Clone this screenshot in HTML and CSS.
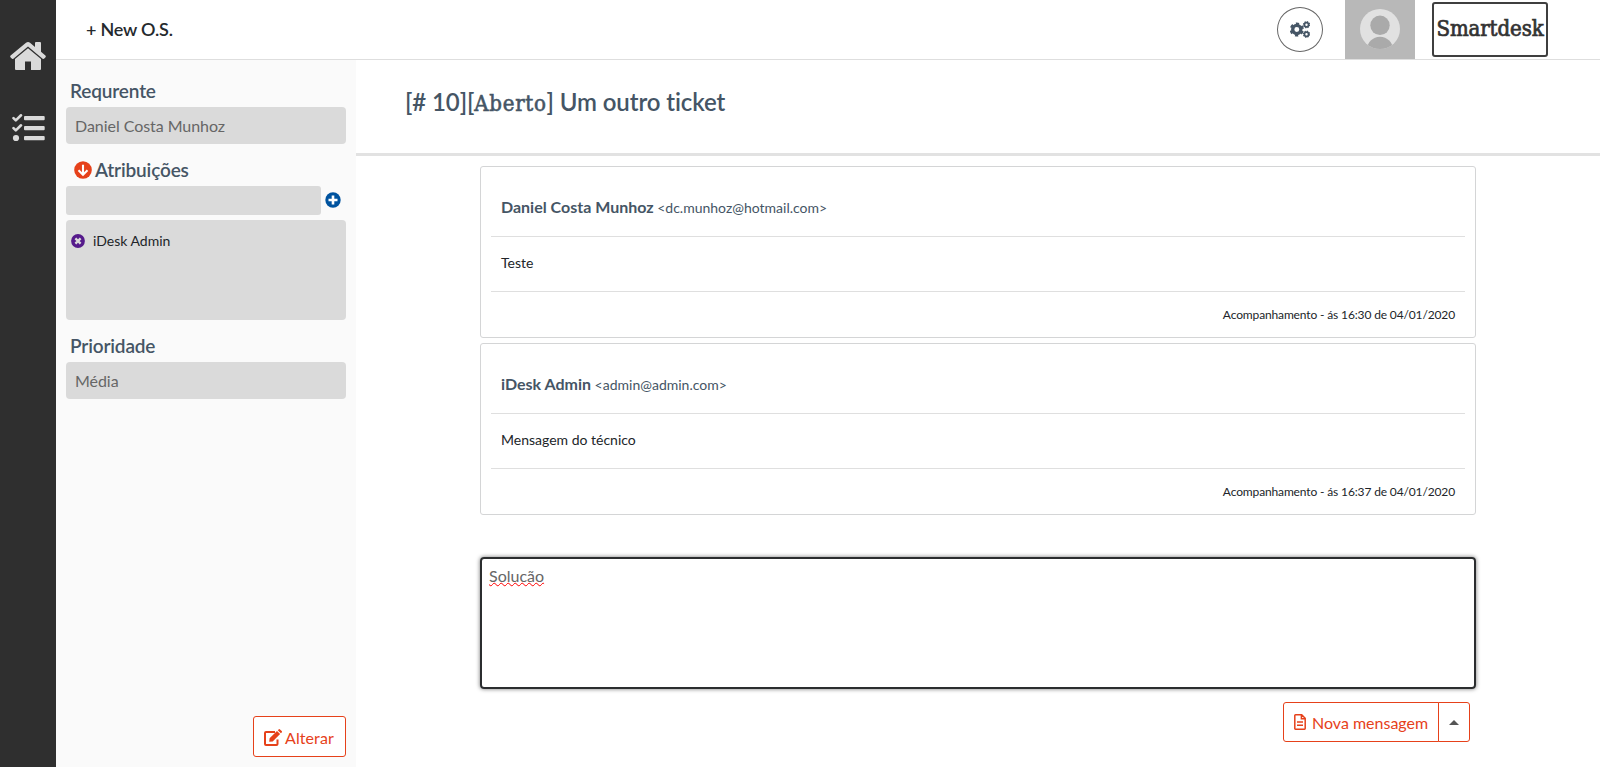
FILE: index.html
```
<!DOCTYPE html>
<html lang="pt-BR">
<head>
<meta charset="utf-8">
<title>Smartdesk</title>
<link rel="stylesheet" href="styles.css">
</head>
<body>
<div class="app">
  <nav class="rail">
    <svg class="rail-home" width="36" height="28" viewBox="0 0 36 28" fill="#dadada">
      <path d="M18 0 C18.8 0 19.4 .3 20 .8 L25 5 V1 Q25 0 26 0 H30 Q31 0 31 1 V9.8 L35.4 13.5 Q36.2 14.3 35.5 15.2 L34.3 16.6 Q33.5 17.4 32.6 16.7 L18 4.6 L3.4 16.7 Q2.5 17.4 1.7 16.6 L.5 15.2 Q-.2 14.3 .6 13.5 L16 .8 Q17 0 18 0Z"/>
      <path d="M18 6.2 L31 17 V27 Q31 28 30 28 H21 V19.5 H15 V28 H6 Q5 28 5 27 V17Z"/>
    </svg>
    <svg class="rail-tasks" width="33" height="28" viewBox="0 0 33 28" fill="#dadada">
      <path d="M1.5 4.1 L3.8 6.4 L9 1.3 M1.5 14.1 L3.8 16.4 L9 11.3" fill="none" stroke="#dadada" stroke-width="2.6" stroke-linecap="round" stroke-linejoin="round"/>
      <circle cx="4" cy="24" r="3.1"/>
      <rect x="12" y="2" width="20.7" height="4.2" rx="1"/><rect x="12" y="12" width="20.7" height="4.2" rx="1"/><rect x="12" y="22" width="20.7" height="4.2" rx="1"/>
    </svg>
  </nav>
  <div class="page">
    <header class="topbar">
      <a class="new-os">+ New O.S.</a>
      <button class="settings" aria-label="Settings">
        <svg width="20" height="17" viewBox="0 0 20 17" fill="none" stroke="#455565">
          <circle cx="6.8" cy="8.5" r="4.1" stroke-width="3.3"/>
          <circle cx="6.8" cy="8.5" r="6" stroke-width="2.2" stroke-dasharray="3.2 3.083" stroke-dashoffset="-1.5"/>
          <circle cx="16.5" cy="3.7" r="2.1" stroke-width="1.8"/>
          <circle cx="16.5" cy="3.7" r="3" stroke-width="1.2" stroke-dasharray="1.3 1.056"/>
          <circle cx="16.5" cy="13.2" r="2.1" stroke-width="1.8"/>
          <circle cx="16.5" cy="13.2" r="3" stroke-width="1.2" stroke-dasharray="1.3 1.056"/>
        </svg>
      </button>
      <svg class="avatar" width="70" height="59" viewBox="0 0 70 59">
        <defs><clipPath id="face"><circle cx="35" cy="29" r="20"/></clipPath></defs>
        <rect width="70" height="59" fill="#b8b8b8"/>
        <circle cx="35" cy="29" r="20" fill="#e1e1e1"/>
        <g clip-path="url(#face)" fill="#aaa"><circle cx="35" cy="25.3" r="9.7"/><circle cx="35" cy="49.8" r="13"/></g>
      </svg>
      <div class="brand">Smartdesk</div>
    </header>
    <div class="columns">
      <aside class="details">
        <h3 class="label">Requrente</h3>
        <div class="field">Daniel Costa Munhoz</div>
        <h3 class="label label-assign">
          <svg width="18" height="18" viewBox="0 0 18 18"><circle cx="9" cy="9" r="8.8" fill="#e6411a"/><path d="M9 3.7V13.5M4.5 9.2L9 13.7L13.5 9.2" fill="none" stroke="#fff" stroke-width="2.1"/></svg>
          <span>Atribuições</span>
        </h3>
        <div class="assign-row">
          <div class="assign-input"></div>
          <svg width="16" height="16" viewBox="0 0 16 16"><circle cx="8" cy="8" r="7.7" fill="#00539f"/><path d="M8 3.5V12.5M3.5 8H12.5" stroke="#fff" stroke-width="2.6"/></svg>
        </div>
        <div class="assignees">
          <svg width="14" height="14" viewBox="0 0 14 14"><circle cx="7" cy="7" r="6.9" fill="#551a8b"/><path d="M4.4 4.4L9.6 9.6M9.6 4.4L4.4 9.6" stroke="#dadada" stroke-width="2.3"/></svg>
          <span>iDesk Admin</span>
        </div>
        <h3 class="label label-priority">Prioridade</h3>
        <div class="field">Média</div>
        <button class="btn btn-edit">
          <svg width="19" height="17" viewBox="0 0 19 17"><path d="M11 3H2Q1 3 1 4V15Q1 16 2 16H12.5Q13.5 16 13.5 15V10.5" fill="none" stroke="#e6411a" stroke-width="2"/><path d="M5.2 12.8L5.6 9.3L13 1.9L16.1 5L8.7 12.4ZM13.8 1.2L14.6.4Q15.3-.2 16 .4L17.7 2.1Q18.3 2.8 17.7 3.5L16.9 4.3Z" fill="#e6411a"/></svg>
          <span>Alterar</span>
        </button>
      </aside>
      <main class="ticket">
        <h1 class="ticket-title">[# 10][<span class="status">Aberto</span>] Um outro ticket</h1>
        <section class="thread">
          <article class="card">
            <div class="card-from"><b>Daniel Costa Munhoz</b> <span>&lt;dc.munhoz@hotmail.com&gt;</span></div>
            <div class="card-text">Teste</div>
            <div class="card-meta">Acompanhamento - ás 16:30 de 04/01/2020</div>
          </article>
          <article class="card">
            <div class="card-from"><b>iDesk Admin</b> <span>&lt;admin@admin.com&gt;</span></div>
            <div class="card-text">Mensagem do técnico</div>
            <div class="card-meta">Acompanhamento - ás 16:37 de 04/01/2020</div>
          </article>
          <div class="reply"><span class="misspelt">Solucão</span></div>
          <div class="actions">
            <button class="btn btn-send">
              <svg width="12" height="16" viewBox="0 0 12 16" fill="none" stroke="#e6411a" stroke-width="1.5"><path d="M1.5.8H7.7L11.2 4.3V14.5Q11.2 15.2 10.5 15.2H1.5Q.8 15.2.8 14.5V1.5Q.8.8 1.5.8ZM7.4 1V4.7H11M3 8H9M3 11.2H9"/></svg>
              <span>Nova mensagem</span>
            </button>
            <button class="btn btn-more" aria-label="Mais"><i class="caret"></i></button>
          </div>
        </section>
      </main>
    </div>
  </div>
</div>
</body>
</html>
```
FILE: styles.css
```
* { box-sizing: border-box; }
body { margin: 0; font-family: Lato, sans-serif; font-size: 16px; color: #212529; background: #fff; font-variant-ligatures: none; }
.app { display: flex; height: 767px; overflow: hidden; }
.rail { width: 56px; flex: none; background: #2f2f2f; display: flex; flex-direction: column; align-items: center; padding-top: 42px; }
.rail svg { display: block; }
.rail-tasks { margin-top: 44px; }
.page { flex: 1; display: flex; flex-direction: column; }
.topbar { height: 60px; flex: none; border-bottom: 1px solid #dedede; display: flex; align-items: flex-start; padding: 0 52px 0 30px; }
.new-os { font-size: 18px; font-weight: 600; line-height: 58px; letter-spacing: -.2px; color: #252a2e; margin-right: auto; }
.settings { width: 46px; height: 45px; margin: 7px 22px 0 0; padding: 0; border: 1px solid #666; border-radius: 50%; background: none; display: flex; align-items: center; justify-content: center; }
.avatar { display: block; margin-right: 17px; }
.brand { width: 116px; height: 55px; margin-top: 2px; border: 2px solid #3f3f3f; border-radius: 3px; color: #333; font: 400 22px/49px "DejaVu Serif Condensed", "DejaVu Serif", serif; font-stretch: condensed; letter-spacing: -.1px; -webkit-text-stroke: .7px #333; white-space: nowrap; display: flex; justify-content: center; }
.columns { flex: 1; display: flex; }
.details { width: 300px; flex: none; background: #fafafa; padding: 19px 10px 10px; display: flex; flex-direction: column; }
.label { margin: 0 0 5px; padding-left: 4px; font-size: 19px; font-weight: 600; line-height: 23px; letter-spacing: -.15px; color: #455565; }
.field { height: 37px; flex: none; border-radius: 4px; background: #dadada; color: #666; line-height: 38px; padding-left: 9px; letter-spacing: -.05px; }
.label-assign { display: flex; align-items: center; gap: 3px; padding-left: 8px; margin: 14px 0 5px; }
.assign-row { display: flex; align-items: center; gap: 4px; height: 29px; }
.assign-row svg { margin-bottom: 1px; }
.assign-input { width: 255px; height: 29px; border-radius: 3px; background: #dadada; }
.assignees { height: 100px; margin-top: 5px; border-radius: 4px; background: #dadada; display: flex; align-items: flex-start; gap: 8px; padding: 14px 5px; font-size: 14px; line-height: 14px; }
.label-priority { margin-top: 14px; }
.btn { font: 16px Lato, sans-serif; color: #e6411a; background: #fff; border: 1px solid #e6411a; border-radius: 3px; padding: 0; display: flex; align-items: center; }
.btn-edit { width: 93px; height: 41px; margin: auto 0 0 auto; padding: 1px 0 0 10px; gap: 2px; letter-spacing: .1px; }
.ticket { flex: 1; }
.ticket-title { margin: 0; height: 96px; border-bottom: 3px solid #e2e2e2; padding: 27px 0 0 49px; font-size: 24px; font-weight: 600; line-height: 29px; color: #455565; white-space: nowrap; letter-spacing: -.1px; }
.status { font-family: "DejaVu Serif Condensed", "DejaVu Serif", serif; font-stretch: condensed; font-weight: 400; font-size: 22px; letter-spacing: .7px; -webkit-text-stroke: .6px #455565; }
.thread { width: 996px; margin: 10px 0 0 124px; display: flex; flex-direction: column; }
.card { height: 172px; margin-bottom: 5px; border: 1px solid #d4d5d6; border-radius: 3px; padding: 0 10px; font-size: 14px; }
.card-from { height: 70px; border-bottom: 1px solid #dfdfdf; padding: 30px 10px 0; line-height: 20px; color: #455565; }
.card-from b { font-size: 16px; }
.card-text { height: 55px; border-bottom: 1px solid #dfdfdf; padding: 16px 10px 0; line-height: 20px; }
.card-meta { padding: 13px 10px 0; font-size: 12px; line-height: 20px; text-align: right; letter-spacing: -.14px; }
.reply { height: 132px; margin-top: 37px; border: 2px solid #2b2d2f; border-radius: 4px; box-shadow: 0 0 4px rgba(0,0,0,.55); padding: 7px; color: #666; line-height: 20px; }
.misspelt { text-decoration: underline wavy red 1px; text-underline-offset: 0; text-decoration-skip-ink: none; }
.actions { display: flex; justify-content: flex-end; padding-right: 6px; margin-top: 13px; }
.btn-send { width: 156px; height: 40px; padding-left: 10px; gap: 6px; border-radius: 3px 0 0 3px; }
.btn-send span { padding-top: 1px; }
.btn-more { width: 32px; height: 40px; margin-left: -1px; border-radius: 0 3px 3px 0; justify-content: center; }
.caret { border: 5px solid transparent; border-top: 0; border-bottom: 5px solid #555; }
```
